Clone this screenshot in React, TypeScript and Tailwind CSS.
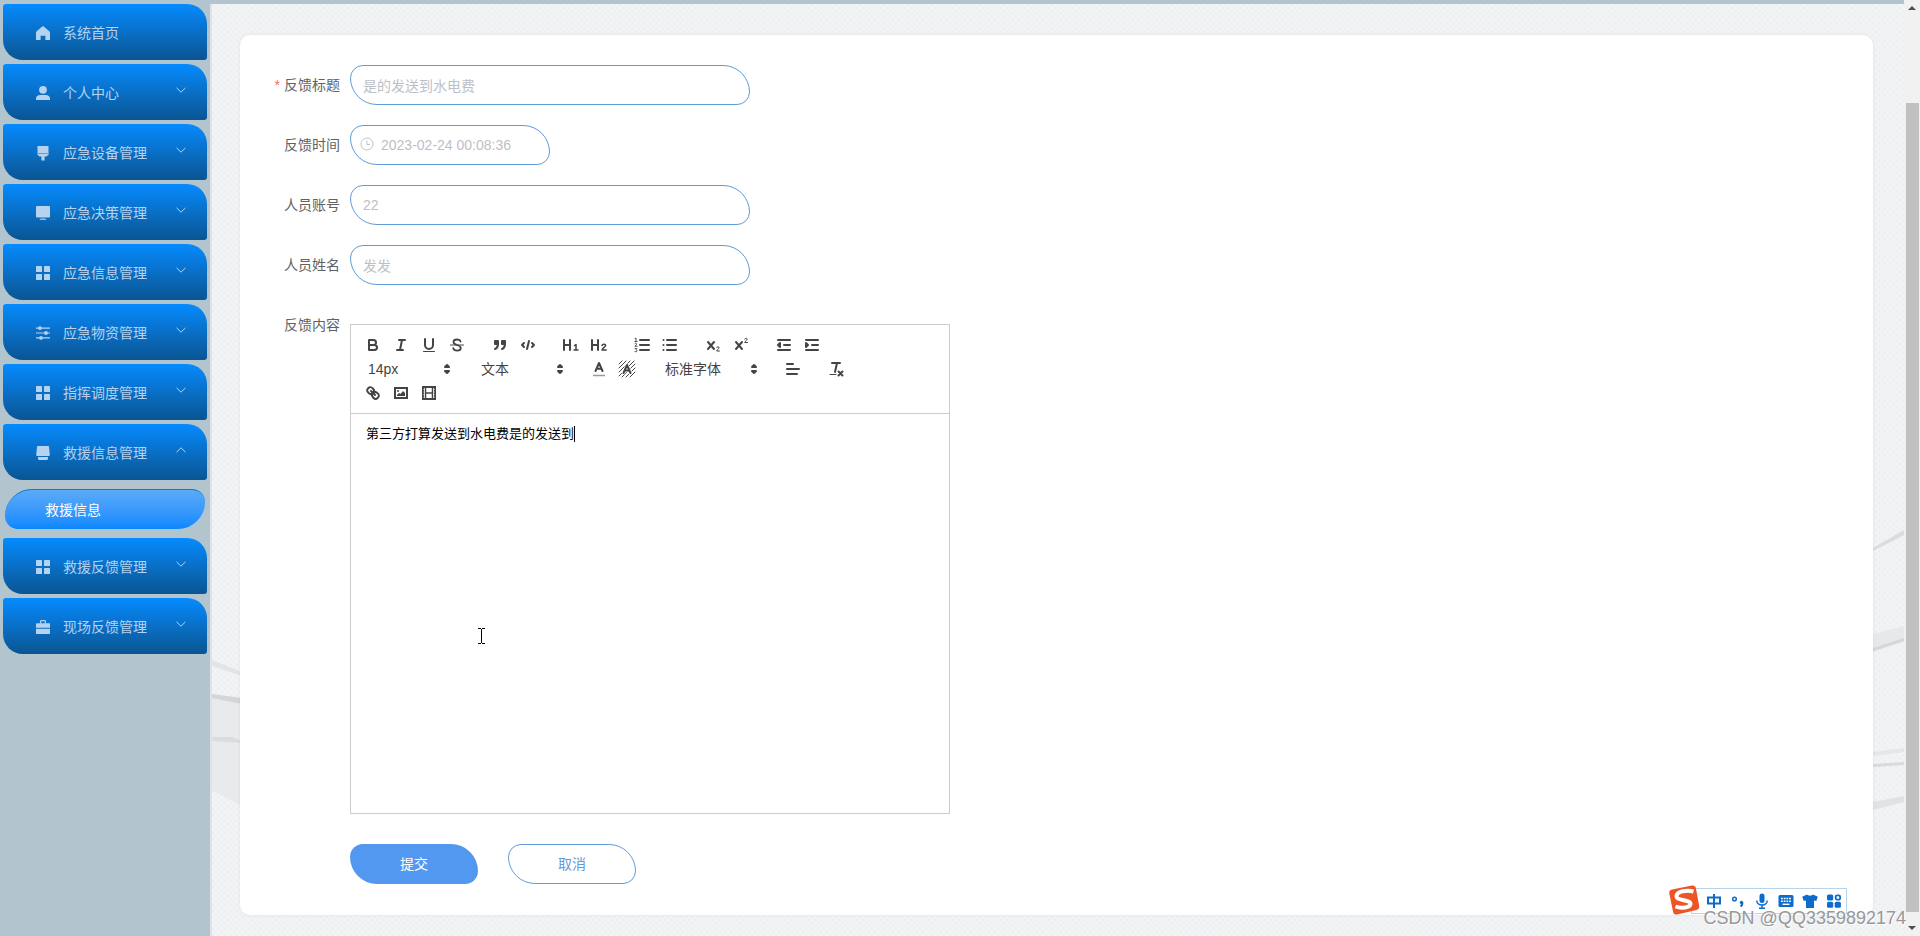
import React from 'react';
import { clsx } from 'clsx';

type IconName = 'home' | 'user' | 'brush' | 'monitor' | 'grid' | 'sliders' | 'printer' | 'case';

interface MenuEntry {
  label: string;
  icon: IconName;
  open?: boolean;
  leaf?: boolean;
  children?: string[];
}

const MENU: MenuEntry[] = [
  { label: '系统首页', icon: 'home', leaf: true },
  { label: '个人中心', icon: 'user' },
  { label: '应急设备管理', icon: 'brush' },
  { label: '应急决策管理', icon: 'monitor' },
  { label: '应急信息管理', icon: 'grid' },
  { label: '应急物资管理', icon: 'sliders' },
  { label: '指挥调度管理', icon: 'grid' },
  { label: '救援信息管理', icon: 'printer', open: true, children: ['救援信息'] },
  { label: '救援反馈管理', icon: 'grid' },
  { label: '现场反馈管理', icon: 'case' },
];

function MenuIcon({ name }: { name: IconName }) {
  return (
    <svg viewBox="0 0 16 16" className="h-4 w-4 shrink-0" fill="currentColor" aria-hidden="true">
      {name === 'home' && <path d="M7.200 1.600a1.200 1.200 0 0 1 1.600 0l5.500 4.700c.5.400.7.900.7 1.500V15h-4.600v-4.200H5.600V15H1V7.800c0-.6.2-1.100.7-1.500z" />}
      {name === 'user' && (
        <>
          <circle cx="8" cy="4.800" r="3.900" />
          <path d="M1 15v-1.500C1 11.200 2.800 10 5 10h6c2.200 0 4 1.200 4 3.500V15z" />
        </>
      )}
      {name === 'brush' && (
        <>
          <path d="M2.500 1h11v7h-11z" />
          <path d="M2 8.500h12v.6L11.500 11.500H9.600v4H6.400v-4H4.500L2 9.100z" />
        </>
      )}
      {name === 'monitor' && (
        <>
          <rect x="1" y="1" width="14" height="11.500" rx="0.800" />
          <path d="M4.500 14.800c0-.8 1.500-1.300 3.500-1.300s3.500.5 3.500 1.300z" />
        </>
      )}
      {name === 'grid' && (
        <>
          <rect x="1" y="1" width="6" height="6" rx="0.600" />
          <rect x="9" y="1" width="6" height="6" rx="0.600" />
          <rect x="1" y="9" width="6" height="6" rx="0.600" />
          <rect x="9" y="9" width="6" height="6" rx="0.600" />
        </>
      )}
      {name === 'sliders' && (
        <>
          <path d="M1 2.500h14v1.200H1zM1 7.400h14v1.200H1zM1 12.300h14v1.200H1z" />
          <circle cx="5" cy="3.100" r="1.900" />
          <circle cx="11" cy="8" r="1.900" />
          <circle cx="6" cy="12.900" r="1.900" />
        </>
      )}
      {name === 'printer' && (
        <>
          <path d="M3 1h10c.6 0 1 .4 1 1l.8 7.500c.1.800-.4 1.500-1.200 1.500H2.400c-.8 0-1.300-.7-1.200-1.500L2 2c0-.6.4-1 1-1z" />
          <path d="M3 12h10v1.500c0 .8-.6 1.500-1.400 1.500H4.400C3.600 15 3 14.300 3 13.500z" />
        </>
      )}
      {name === 'case' && (
        <>
          <path d="M5 4.500V2.300C5 1.600 5.500 1 6.200 1h3.600c.7 0 1.200.6 1.200 1.300v2.200H9.800V2.300H6.200v2.200z" />
          <path d="M2 4.300h12c.6 0 1 .4 1 1v3.500H1V5.300c0-.6.4-1 1-1zM1 9.800h14V14c0 .6-.4 1-1 1H2c-.6 0-1-.4-1-1z" />
        </>
      )}
    </svg>
  );
}

function Sidebar() {
  return (
    <aside className="w-[210px] shrink-0 bg-[#b2c4cd] px-[3px] pt-1">
      <nav className="flex flex-col gap-1">
        {MENU.map((item) => (
          <React.Fragment key={item.label}>
            <button
              type="button"
              aria-expanded={item.leaf ? undefined : !!item.open}
              className="flex h-14 items-center rounded-[3px_20px_3px_20px] bg-linear-to-b from-[#058bff] to-[#0a5592] pt-0.5 pr-5 pl-8 text-sm text-[#b5d2ee]"
            >
              <MenuIcon name={item.icon} />
              <span className="ml-3 flex-1 text-left">{item.label}</span>
              {!item.leaf && (
                <svg
                  viewBox="0 0 12 12"
                  className={clsx('mb-1.5 h-3 w-3', item.open && 'rotate-180')}
                  fill="none"
                  stroke="currentColor"
                  aria-hidden="true"
                >
                  <path d="M1.500 3.800 6 8.200l4.500-4.400" />
                </svg>
              )}
            </button>
            {item.children?.map((child) => (
              <a
                key={child}
                href="#rescue"
                className="mx-0.5 my-[5px] flex h-10 items-center rounded-[27px_13px_27px_13px] border-t border-[#1474cc] bg-linear-to-b from-[#5aabf8] to-[#0688ff] pl-10 text-sm text-white"
              >
                {child}
              </a>
            ))}
          </React.Fragment>
        ))}
      </nav>
    </aside>
  );
}

function Field({ id, label, required, children }: { id: string; label: string; required?: boolean; children: React.ReactNode }) {
  return (
    <div className="mb-5 flex">
      <label htmlFor={id} id={`${id}-label`} className="h-10 w-20 shrink-0 pr-2.5 text-right text-sm leading-10 whitespace-nowrap text-[#606266]">
        {required && <span className="mr-1 text-[#f56c6c]">*</span>}
        {label}
      </label>
      {children}
    </div>
  );
}

const inputClass =
  'h-10 w-full rounded-[13px_27px_13px_27px] border border-[#5f9bd8] bg-white pr-3 text-sm text-[#bcbfc6] outline-none';

function TextField({ id, label, value, required }: { id: string; label: string; value: string; required?: boolean }) {
  return (
    <Field id={id} label={label} required={required}>
      <div className="w-[400px]">
        <input id={id} readOnly defaultValue={value} className={clsx(inputClass, 'pl-3')} />
      </div>
    </Field>
  );
}

/* ---------- editor toolbar ---------- */

function ToolButton({ title, children }: { title: string; children: React.ReactNode }) {
  return (
    <button type="button" title={title} aria-label={title} className="flex h-6 w-7 items-center justify-center">
      <svg viewBox="0 0 18 18" className="h-[18px] w-[18px]" fill="none" stroke="#444" strokeWidth="2" strokeLinecap="round" strokeLinejoin="round">
        {children}
      </svg>
    </button>
  );
}

function Picker({ label, value, className }: { label: string; value: string; className: string }) {
  return (
    <span className={clsx('relative h-6', className)}>
      <select aria-label={label} className="h-6 w-full appearance-none bg-transparent pl-[9px] text-sm text-[#444] outline-none">
        <option>{value}</option>
      </select>
      <svg viewBox="0 0 18 18" className="pointer-events-none absolute top-[3px] right-px h-[18px] w-[18px]" fill="#444" stroke="#444" strokeWidth="2" strokeLinejoin="round" aria-hidden="true">
        <path d="m7 11 2 2 2-2z" />
        <path d="m7 7 2-2 2 2z" />
      </svg>
    </span>
  );
}

function Group({ children }: { children: React.ReactNode }) {
  return <span className="mr-[15px] flex">{children}</span>;
}

function Toolbar() {
  return (
    <div className="flex flex-wrap border-b border-[#ccc] p-2">
      <Group>
        <ToolButton title="加粗">
          <path d="M5 4h4.500A2.500 2.500 0 0 1 12 6.500 2.500 2.500 0 0 1 9.500 9H5zM5 9h5.500a2.500 2.500 0 0 1 0 5H5z" />
        </ToolButton>
        <ToolButton title="斜体">
          <path d="M7 4h6M5 14h6M8 14l2-10" />
        </ToolButton>
        <ToolButton title="下划线">
          <path d="M5 3v6a4 4 0 0 0 8 0V3" />
          <path d="M3.500 15.500h11" strokeWidth="1" />
        </ToolButton>
        <ToolButton title="删除线">
          <path d="M15.500 9h-13" strokeWidth="1" />
          <path d="M12.500 5.500C12 4 10.600 3.500 9 3.500 7 3.500 5.500 4.400 5.500 6c0 1.500 1.200 2.200 3.500 3 2.600.8 3.800 1.600 3.800 3 0 1.700-1.600 2.600-3.700 2.600-2 0-3.400-.8-3.900-2.400" strokeWidth="1.800" />
        </ToolButton>
      </Group>
      <Group>
        <ToolButton title="引用">
          <path d="M4 5h3v3H4zM11 5h3v3h-3zM7 8c0 4.031-3 5-3 5M14 8c0 4.031-3 5-3 5" fill="#444" />
        </ToolButton>
        <ToolButton title="代码">
          <path d="m5 7-2 2 2 2M13 7l2 2-2 2M10 5l-2 8" />
        </ToolButton>
      </Group>
      <Group>
        <ToolButton title="标题一">
          <path d="M2 4v10M8 4v10M2 9h6" />
          <path d="m12.500 9.500 1.500-1V14M12 14h4" strokeWidth="1.500" />
        </ToolButton>
        <ToolButton title="标题二">
          <path d="M2 4v10M8 4v10M2 9h6" />
          <path d="M12 9.600c.2-2 3.700-1.900 3.700 0 0 1.300-3.700 2.500-3.700 4.400h4.200" strokeWidth="1.500" />
        </ToolButton>
      </Group>
      <Group>
        <ToolButton title="有序列表">
          <path d="M7 4h9M7 9h9M7 14h9" />
          <path d="m2 2.500 1-.500v3.500M1.800 5.500h2.400M2 7.500c1-.800 2 0 1.600.800L2 10.300h2.200M2 12.500h1.800L3 13.800c1.300 0 1.400 2-.1 2L2 15.600" strokeWidth="0.900" />
        </ToolButton>
        <ToolButton title="无序列表">
          <path d="M6 4h9M6 9h9M6 14h9" />
          <path d="M2.500 4h.01M2.500 9h.01M2.500 14h.01" />
        </ToolButton>
      </Group>
      <Group>
        <ToolButton title="下标">
          <path d="m4 6 6 7M10 6l-6 7" />
          <path d="M12.700 11.700c.2-1.300 2.500-1.200 2.500.1 0 .9-2.300 1.800-2.500 3.200h2.800" strokeWidth="1" />
        </ToolButton>
        <ToolButton title="上标">
          <path d="m4 6 6 7M10 6l-6 7" />
          <path d="M12.700 3.200c.2-1.300 2.500-1.200 2.500.1 0 .9-2.300 1.800-2.500 3.200h2.800" strokeWidth="1" />
        </ToolButton>
      </Group>
      <Group>
        <ToolButton title="减少缩进">
          <path d="M3 14h12M3 4h12M9 9h6M5 7v4L3 9z" fill="#444" />
        </ToolButton>
        <ToolButton title="增加缩进">
          <path d="M3 14h12M3 4h12M9 9h6M3 7v4l2-2z" fill="#444" />
        </ToolButton>
      </Group>
      <Group>
        <Picker label="字号" value="14px" className="w-[98px]" />
      </Group>
      <Group>
        <Picker label="段落格式" value="文本" className="w-[98px]" />
      </Group>
      <Group>
        <ToolButton title="文字颜色">
          <path d="M3 15.500h12" strokeWidth="1.500" stroke="#999" strokeLinecap="butt" />
          <path d="M5.500 11 9 3l3.500 8M6.800 8.800h4.400" />
        </ToolButton>
        <ToolButton title="背景颜色">
          <path d="M1 4l3-3M1 8l7-7M1 12 12 1M1 16 16 1M4 17 17 4M8 17l9-9M12 17l5-5" strokeWidth="1" />
          <path d="M5.500 13 9 5l3.500 8M6.800 10.500h4.400" stroke="#fff" strokeWidth="3.500" />
          <path d="M5.500 13 9 5l3.500 8M6.800 10.500h4.400" />
        </ToolButton>
      </Group>
      <Group>
        <Picker label="字体" value="标准字体" className="w-[108px]" />
      </Group>
      <Group>
        <ToolButton title="对齐">
          <path d="M3 9h12M3 14h10M3 4h6" />
        </ToolButton>
      </Group>
      <Group>
        <ToolButton title="清除格式">
          <path d="M5 3h8M8 12l2-9M11.500 11.500l4 4M15.500 11.500l-4 4" />
          <path d="M3 14.500h6" strokeWidth="1.200" />
        </ToolButton>
      </Group>
      <Group>
        <ToolButton title="链接">
          <path d="m7 7 4 4" />
          <path d="M8.900 4.577a3.476 3.476 0 0 1 .36 4.679A3.476 3.476 0 0 1 4.577 8.900C3.185 7.500 2.035 6.400 4.217 4.217S7.500 3.185 8.900 4.577z" />
          <path d="M13.423 9.100a3.476 3.476 0 0 0-4.679-.36 3.476 3.476 0 0 0 .36 4.679c1.392 1.392 2.500 2.542 4.679.36s1.032-3.287-.36-4.679z" />
        </ToolButton>
        <ToolButton title="图片">
          <rect x="3" y="4" width="12" height="10" strokeLinejoin="miter" />
          <circle cx="6" cy="7" r="1" fill="#444" stroke="none" />
          <path d="M5 12v-1l2-2 1.500 1L11 7l2 2v3z" fill="#444" stroke="none" />
        </ToolButton>
        <ToolButton title="视频">
          <rect x="3" y="3" width="12" height="12" strokeLinejoin="miter" />
          <path d="M5.500 3v12M12.500 3v12M5.500 9h7" strokeWidth="1.500" />
          <path d="M3.500 5.500h1M3.500 8h1M3.500 10.500h1M3.500 13h1M13.500 5.500h1M13.500 8h1M13.500 10.500h1M13.500 13h1" stroke="#fff" strokeWidth="1" strokeLinecap="butt" />
        </ToolButton>
      </Group>
    </div>
  );
}

function FeedbackForm() {
  return (
    <form className="px-[30px] py-[30px]" onSubmit={(e) => e.preventDefault()}>
      <TextField id="title" label="反馈标题" value="是的发送到水电费" required />
      <Field id="time" label="反馈时间">
        <div className="relative w-[200px]">
          <svg viewBox="0 0 14 14" className="absolute top-3 left-2.5 h-3.5 w-3.5" fill="none" stroke="#c0c4cc" aria-hidden="true">
            <circle cx="7" cy="7" r="6" />
            <path d="M7 3.500V7.500h3" />
          </svg>
          <input id="time" readOnly defaultValue="2023-02-24 00:08:36" className={clsx(inputClass, 'pl-[30px]')} />
        </div>
      </Field>
      <TextField id="account" label="人员账号" value="22" />
      <TextField id="name" label="人员姓名" value="发发" />
      <Field id="content" label="反馈内容">
        <div className="mt-[19px] w-[600px] border border-[#ccc]">
          <Toolbar />
          <div
            id="content"
            role="textbox"
            aria-multiline="true"
            aria-labelledby="content-label"
            contentEditable
            suppressContentEditableWarning
            className="min-h-[399px] px-[15px] py-[11px] text-[13px] leading-[18px] text-black outline-none"
          >
            <p className="flex items-center">
              第三方打算发送到水电费是的发送到
              <span className="h-4 w-px bg-black" />
            </p>
          </div>
        </div>
      </Field>
      <div className="mt-[30px] ml-20 flex gap-[30px]">
        <button type="submit" className="h-10 w-32 rounded-[13px_27px_13px_27px] bg-[#5398f0] text-sm text-white">
          提交
        </button>
        <button type="button" className="h-10 w-32 rounded-[13px_27px_13px_27px] border border-[#5f9bd8] bg-white text-sm text-[#5f9bd8]">
          取消
        </button>
      </div>
    </form>
  );
}

/* Faint marble veins that show beside the card */
function Marble() {
  return (
    <svg viewBox="0 0 1694 932" preserveAspectRatio="none" className="absolute inset-0 h-full w-full" aria-hidden="true">
      <defs>
        <pattern id="grain" width="6" height="6" patternUnits="userSpaceOnUse">
          <path d="M0 1h2M3 4h2" stroke="#e9ecee" />
          <path d="M3 1h1M0 4h1" stroke="#f8f9fa" />
        </pattern>
      </defs>
      <rect width="1694" height="932" fill="url(#grain)" />
      <path d="M0 690 30 700V802L0 786z" fill="#e8eaeb" />
      <path d="M0 656 30 668v4L0 662z" fill="#e2e4e6" />
      <path d="M0 690 30 694v6L0 694z" fill="#d3d5d7" />
      <path d="M0 733h20l10 4v2L0 737z" fill="#dadcde" />
      <path d="M1663 544 1694 526v5l-31 16z" fill="#dadcde" />
      <path d="M1663 630 1694 622v16l-31 10z" fill="#e6e8ea" />
      <path d="M1663 644 1694 634v3l-31 10z" fill="#d5d7d9" />
      <path d="M1663 748 1694 744v4l-31 4z" fill="#e4e6e8" />
      <path d="M1663 760 1694 758v3l-31 2z" fill="#d8dadc" />
      <path d="M1663 798 1694 792v6l-31 8z" fill="#e0e2e4" />
    </svg>
  );
}

function PageScrollbar() {
  return (
    <div className="flex w-4 shrink-0 flex-col items-center justify-between bg-[#f1f1f1]" aria-hidden="true">
      <span className="mt-1.5 border-x-4 border-b-4 border-x-transparent border-b-[#505050]" />
      <span className="mt-[93px] w-[13px] flex-1 bg-[#c1c1c1]" />
      <span className="mt-3.5 mb-1.5 border-x-4 border-t-4 border-x-transparent border-t-[#505050]" />
    </div>
  );
}

function ImeBar() {
  return (
    <div className="absolute right-[73px] bottom-[22px] flex h-[26px] items-center border border-[#b9d3ea] bg-white pr-1 pl-3.5 text-[#0d6ccb]">
      <svg viewBox="0 0 32 32" className="absolute -top-[5px] -left-6 h-8 w-8" aria-hidden="true">
        <path d="M4 5.500 24 1.500c2-.4 3.500.5 3.900 2.500l3.300 18c.3 2-.6 3.400-2.600 3.900L9 30.400c-2 .4-3.500-.5-3.900-2.500L1.300 9.400C.9 7.400 2 5.900 4 5.500z" fill="#ee5526" />
        <path d="M25.500 7.500C19 5.500 9 7.500 8.500 12c-.5 5 14.500 3.500 14 8-.4 3.800-9.500 4.800-15 2.500" fill="none" stroke="#fff" strokeWidth="4" />
      </svg>
      <div className="flex items-center gap-2">
        <svg viewBox="0 0 16 16" className="h-4 w-4" fill="none" stroke="currentColor" strokeWidth="2" aria-hidden="true">
          <path d="M2 4.500h12v6H2zM8 1v14" />
        </svg>
        <svg viewBox="0 0 16 16" className="h-4 w-4" fill="none" stroke="currentColor" aria-hidden="true">
          <circle cx="4.500" cy="6" r="1.800" strokeWidth="1.500" />
          <path d="M12 9.500c1 1 0 3-1.500 4" strokeWidth="2" />
          <circle cx="11.500" cy="9.500" r="1.700" fill="currentColor" stroke="none" />
        </svg>
        <svg viewBox="0 0 16 16" className="h-4 w-4" fill="none" stroke="currentColor" strokeWidth="1.500" aria-hidden="true">
          <rect x="5.500" y="0.500" width="5" height="9.500" rx="2.500" fill="currentColor" stroke="none" />
          <path d="M2.800 7.500c0 6 10.400 6 10.400 0M8 12v3M5 15.200h6" />
        </svg>
        <svg viewBox="0 0 16 16" className="h-4 w-4" aria-hidden="true">
          <rect x="0.500" y="2" width="15" height="12" rx="1.500" fill="currentColor" />
          <path d="M3 5.500h10M3 8.200h10" stroke="#fff" strokeWidth="1.600" strokeDasharray="1.800 0.900" />
          <path d="M4.500 11.300h7" stroke="#fff" strokeWidth="1.400" />
        </svg>
        <svg viewBox="0 0 16 16" className="h-4 w-4" fill="currentColor" aria-hidden="true">
          <path d="M5 1.500c1 1.500 5 1.500 6 0l4.800 2.300-1.500 4.200-2.300-.5V15H4V7.500L1.700 8 .2 3.800z" />
        </svg>
        <svg viewBox="0 0 16 16" className="h-4 w-4" fill="currentColor" aria-hidden="true">
          <rect x="1" y="1.500" width="6.200" height="6" rx="1.500" />
          <rect x="1" y="8.700" width="6.200" height="6" rx="1.500" />
          <rect x="8.700" y="8.700" width="6.200" height="6" rx="1.500" />
          <rect x="9.700" y="2.300" width="4.400" height="4.400" rx="1.500" fill="none" stroke="currentColor" strokeWidth="1.800" />
        </svg>
      </div>
    </div>
  );
}

export default function App() {
  return (
    <div className="relative flex min-h-screen overflow-hidden bg-[#b2c4cd] font-['Liberation_Sans','Noto_Sans_CJK_SC',sans-serif]">
      <Sidebar />
      <main className="relative mt-1 min-w-0 flex-1 border-l-2 border-[#e4e0e8] bg-[#f0f2f4] pt-[31px] pr-[31px] pb-[21px] pl-7">
        <Marble />
        <section className="relative h-full rounded-[10px] bg-white shadow-[0_0_4px_rgba(0,0,0,0.06)]">
          <FeedbackForm />
        </section>
      </main>
      <PageScrollbar />

      <ImeBar />
      <span className="absolute right-[14px] bottom-1.5 text-[18px] leading-6 text-[#989898] [text-shadow:1px_1px_0_#fff]">
        CSDN @QQ3359892174
      </span>
      {/* text pointer */}
      <svg viewBox="0 0 9 17" className="pointer-events-none absolute top-[628px] left-[477px] h-[17px] w-[9px]" fill="none" stroke="#000" aria-hidden="true">
        <path d="M1 .5h3M5 .5h3M4.500 1v14M1 15.500h3M5 15.500h3" />
      </svg>
    </div>
  );
}
